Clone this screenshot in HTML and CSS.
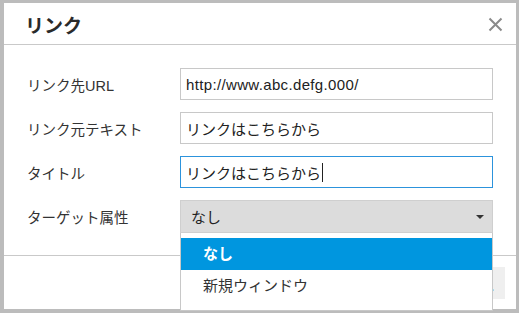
FILE: index.html
```html
<!DOCTYPE html>
<html lang="ja">
<head>
    <meta charset="UTF-8">
    <title>リンク</title>
    <link rel="stylesheet" href="styles.css">
</head>
<body>
<div class="backdrop">
    <div class="dialog">
        <div class="dialogHeader">
            <h1 class="dialogTitle">リンク</h1>
            <button class="closeButton" type="button">
                <svg width="15" height="15" viewBox="0 0 15 15">
                    <path d="M1.5 1.5 L13.5 13.5 M13.5 1.5 L1.5 13.5" stroke="#8a8a8a" stroke-width="2" fill="none"/>
                </svg>
            </button>
        </div>
        <div class="dialogBody">
            <div class="formRow">
                <label class="formLabel">リンク先URL</label>
                <div class="formField"><div class="textInput urlText">http://www.abc.defg.000/</div></div>
            </div>
            <div class="formRow">
                <label class="formLabel">リンク元テキスト</label>
                <div class="formField"><div class="textInput">リンクはこちらから</div></div>
            </div>
            <div class="formRow">
                <label class="formLabel">タイトル</label>
                <div class="formField"><div class="textInput focused">リンクはこちらから<span class="caret"></span></div></div>
            </div>
            <div class="formRow">
                <label class="formLabel">ターゲット属性</label>
                <div class="formField selectWrap">
                    <div class="selectBox">
                        <span>なし</span>
                        <span class="selectArrow"></span>
                    </div>
                    <ul class="selectList">
                        <li class="selectOption selected">なし</li>
                        <li class="selectOption">新規ウィンドウ</li>
                    </ul>
                </div>
            </div>
        </div>
        <div class="dialogFooter">
            <button class="footerButton" type="button">挿入</button>
        </div>
    </div>
</div>
</body>
</html>
```

FILE: styles.css
```css
body {
    margin: 0;
    padding: 0;
    background-color: #bcbcbc;
    font-family: "Liberation Sans", "Noto Sans CJK JP", sans-serif;
    color: #333;
}
.backdrop {
    padding: 3px 3px 4px 4px;
    height: 306px;
}
.dialog {
    position: relative;
    display: flex;
    flex-direction: column;
    width: 512px;
    height: 306px;
    background-color: #fff;
}
.dialogHeader {
    display: flex;
    align-items: center;
    justify-content: space-between;
    box-sizing: border-box;
    height: 42px;
    padding: 2px 13px 0 21px;
    border-bottom: 1px solid #c9c9c9;
}
.dialogTitle {
    margin: 0;
    font-size: 19px;
    font-weight: bold;
    color: #2a2a2a;
}
.closeButton {
    display: flex;
    padding: 0;
    border: 0;
    background: none;
}
.dialogBody {
    display: flex;
    flex-direction: column;
    gap: 12px;
    padding: 23px 23px 22px 23px;
    border-bottom: 1px solid #c9c9c9;
}
.formRow {
    display: flex;
    align-items: center;
}
.formLabel {
    width: 153px;
    font-size: 14.5px;
    color: #333;
}
.formField {
    width: 313px;
}
.textInput {
    box-sizing: border-box;
    height: 32px;
    padding: 0 5px;
    display: flex;
    align-items: center;
    border: 1px solid #c8c8c8;
    font-size: 15px;
    color: #222;
}
.urlText {
    letter-spacing: 0.35px;
}
.textInput.focused {
    border-color: #2c93dc;
}
.caret {
    display: inline-block;
    width: 1px;
    height: 19px;
    margin-left: 1px;
    background-color: #222;
}
.selectWrap {
    position: relative;
}
.selectBox {
    box-sizing: border-box;
    height: 33px;
    display: flex;
    align-items: center;
    justify-content: space-between;
    padding: 0 8px 0 10px;
    background-color: #dcdcdc;
    border: 1px solid #cfcfcf;
    font-size: 15px;
    color: #222;
}
.selectArrow {
    width: 0;
    height: 0;
    border-left: 4px solid transparent;
    border-right: 4px solid transparent;
    border-top: 4px solid #333;
}
.selectList {
    position: absolute;
    left: 0;
    top: 33px;
    z-index: 2;
    box-sizing: border-box;
    width: 313px;
    height: 78px;
    margin: 0;
    padding: 5px 0 0 0;
    list-style-type: none;
    background-color: #fff;
    border: 1px solid #c8c8c8;
    border-top: 0;
}
.selectOption {
    height: 32px;
    line-height: 32px;
    padding-left: 22px;
    font-size: 15px;
    color: #333;
}
.selectOption.selected {
    background-color: #0096df;
    color: #fff;
    font-weight: bold;
}
.dialogFooter {
    flex: 1;
    display: flex;
    align-items: center;
    justify-content: flex-end;
    padding-right: 11px;
}
.footerButton {
    height: 32px;
    padding: 0 11px 0 20px;
    border: 0;
    background-color: #efefef;
    color: #1a8ad4;
    font-size: 14px;
    font-family: "Liberation Sans", "Noto Sans CJK JP", sans-serif;
}
```
